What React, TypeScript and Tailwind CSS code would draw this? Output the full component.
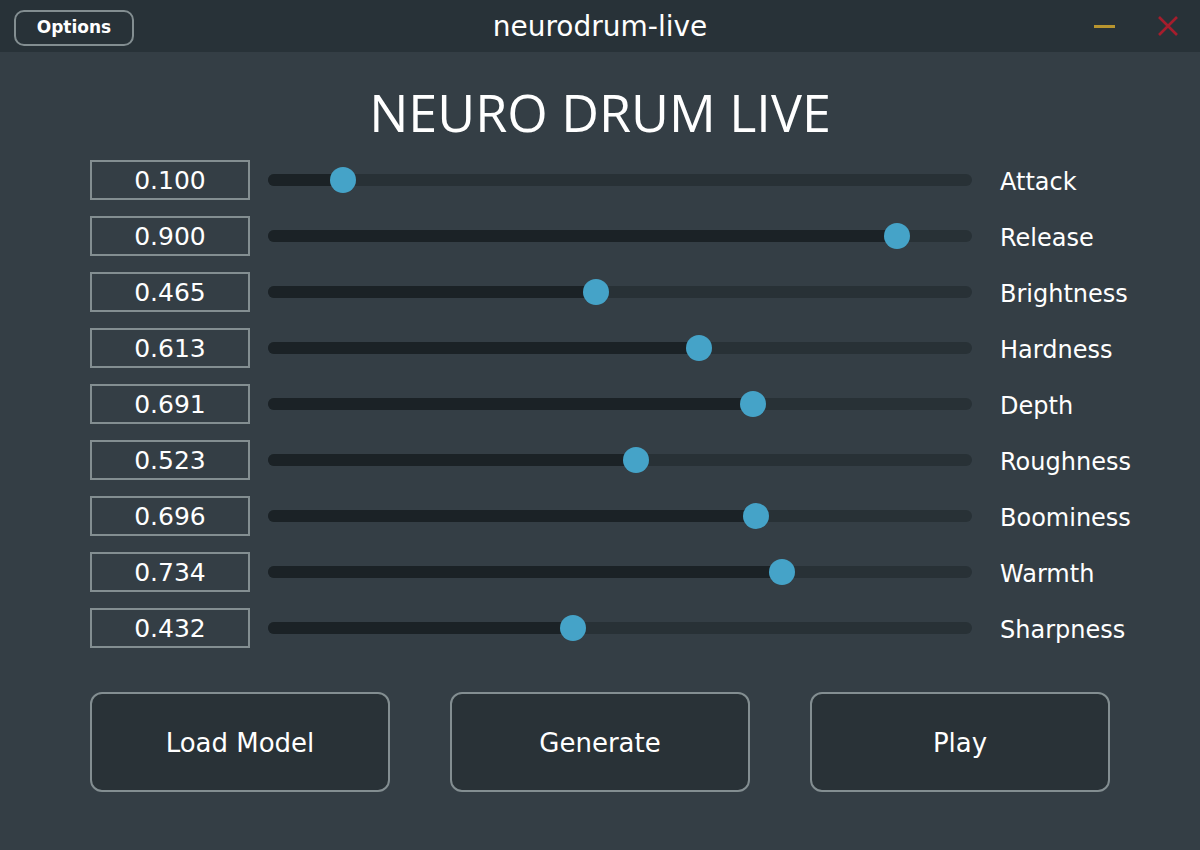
import React from "react";

const params: [string, number][] = [
  ["Attack", 0.1],
  ["Release", 0.9],
  ["Brightness", 0.465],
  ["Hardness", 0.613],
  ["Depth", 0.691],
  ["Roughness", 0.523],
  ["Boominess", 0.696],
  ["Warmth", 0.734],
  ["Sharpness", 0.432],
];

const dv = { fontFamily: '"DejaVu Sans", Verdana, sans-serif' };

function Row({ label, value }: { label: string; value: number }) {
  const center = 6 + value * 692.5;
  return (
    <div className="flex items-center h-[40px]">
      <div
        className="w-[160px] h-[40px] border-2 border-[#838e91] flex items-center justify-center pt-[2px] text-[25px] text-white"
        style={dv}
      >
        {value.toFixed(3)}
      </div>
      <div className="relative ml-[18px] w-[704px] h-[12px] rounded-full bg-[#283136]">
        <div
          className="absolute left-0 top-0 h-[12px] rounded-full bg-[#1b2226]"
          style={{ width: center }}
        />
        <div
          className="absolute top-[-7px] w-[26px] h-[26px] rounded-full bg-[#45a3c8]"
          style={{ left: center - 13 }}
        />
      </div>
      <div className="ml-[28px] pt-[3px] text-[24px] text-white" style={dv}>
        {label}
      </div>
    </div>
  );
}

export default function App() {
  return (
    <div className="w-[1200px] h-[850px] bg-[#343e45] flex flex-col overflow-hidden">
      <div className="relative h-[52px] bg-[#283238] flex items-center shrink-0">
        <div
          className="ml-[14px] mt-[3px] w-[120px] h-[36px] rounded-[10px] border-2 border-[#838e91] flex items-center justify-center pt-[1px] text-white text-[17px] font-bold"
          style={dv}
        >
          Options
        </div>
        <div
          className="absolute left-0 right-0 top-0 h-[52px] pt-[2px] flex items-center justify-center text-white text-[28px] pointer-events-none"
          style={dv}
        >
          neurodrum-live
        </div>
        <div className="ml-auto flex items-center">
          <div className="w-[21px] h-[3px] bg-[#b8952f] mr-[42px]" />
          <svg width="22" height="22" viewBox="0 0 22 22" className="mr-[21px]">
            <path d="M2 2 L20 20 M20 2 L2 20" stroke="#a51d2c" strokeWidth="2.6" />
          </svg>
        </div>
      </div>
      <div className="flex flex-col items-center pt-[34px]">
        <div
          className="h-[52px] leading-none text-[52px] text-white"
          style={{ fontFamily: '"Open Sans", "Noto Sans", sans-serif' }}
        >
          NEURO DRUM LIVE
        </div>
      </div>
      <div className="flex flex-col gap-[16px] pl-[90px] mt-[22px]">
        {params.map(([l, v]) => (
          <Row key={l} label={l} value={v} />
        ))}
      </div>
      <div className="flex gap-[60px] pl-[90px] mt-[44px]">
        {["Load Model", "Generate", "Play"].map((t) => (
          <div
            key={t}
            className="w-[300px] h-[100px] rounded-[12px] border-2 border-[#838e91] bg-[#293237] flex items-center justify-center pt-[2px] text-white text-[26px]"
            style={dv}
          >
            {t}
          </div>
        ))}
      </div>
    </div>
  );
}
